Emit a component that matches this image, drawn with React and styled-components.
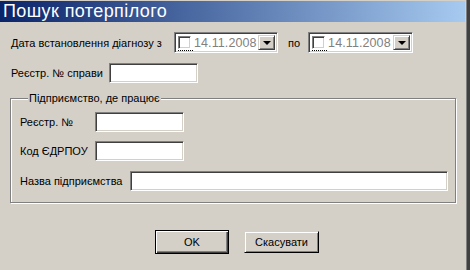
import React from 'react';
import styled, { createGlobalStyle } from 'styled-components';

const Global = createGlobalStyle`
  html, body {
    margin: 0;
    padding: 0;
    background: #d4d0c8;
  }
  body {
    font-family: "Liberation Sans", Arial, sans-serif;
    font-size: 11px;
    color: #000;
  }
`;

const Window = styled.div`
  width: 470px;
  height: 270px;
  box-sizing: border-box;
  background: #d4d0c8;
  border-right: 3px solid #404040;
  box-shadow: inset -1px 0 #808080;
  padding-right: 2px;
  display: flex;
  flex-direction: column;
  overflow: hidden;
`;

const TitleBar = styled.div`
  height: 21px;
  margin-top: 1px;
  background: linear-gradient(to right, #0a246a, #a6caf0);
  color: #fff;
  font-size: 18px;
  letter-spacing: 0.4px;
  line-height: 20px;
  padding-left: 3px;
  white-space: nowrap;
`;

const Body = styled.div`
  display: flex;
  flex-direction: column;
  padding: 10px 0 0 11px;
`;

const Row = styled.div`
  display: flex;
  align-items: center;
  height: ${p => p.$h || 21}px;
  margin-top: ${p => p.$mt || 0}px;
`;

const Label = styled.span`
  width: ${p => (p.$w ? `${p.$w}px` : 'auto')};
  margin-right: ${p => p.$mr || 0}px;
  margin-left: ${p => p.$ml || 0}px;
  white-space: nowrap;
`;

const Sunken = styled.div`
  box-sizing: border-box;
  width: ${p => p.$w}px;
  height: ${p => p.$h || 20}px;
  background: #fff;
  border-top: 1px solid #808080;
  border-left: 1px solid #808080;
  border-bottom: 1px solid #fff;
  border-right: 1px solid #fff;
  box-shadow: inset 1px 1px #404040, inset -1px -1px #d4d0c8;
`;

const Picker = styled(Sunken)`
  display: flex;
  align-items: center;
  padding: 2px 2px 2px 3px;
`;

const Check = styled.span`
  position: relative;
  width: 13px;
  height: 13px;
  box-sizing: border-box;
  background: #fff;
  border-top: 1px solid #808080;
  border-left: 1px solid #808080;
  border-bottom: 1px solid #fff;
  border-right: 1px solid #fff;
  box-shadow: inset 1px 1px #404040, inset -1px -1px #d4d0c8;
  margin-right: 3px;
  &::after {
    content: '';
    position: absolute;
    left: -1px;
    right: -3px;
    bottom: -3px;
    border-bottom: 1px dotted #000;
  }
`;

const DateText = styled.span`
  flex: 1;
  color: #808080;
  font-size: 12.5px;
  letter-spacing: 0.1px;
`;

const DropBtn = styled.span`
  width: 17px;
  height: 15px;
  box-sizing: border-box;
  background: #d4d0c8;
  border-top: 1px solid #d4d0c8;
  border-left: 1px solid #d4d0c8;
  border-bottom: 1px solid #404040;
  border-right: 1px solid #404040;
  box-shadow: inset 1px 1px #fff, inset -1px -1px #808080;
  display: flex;
  align-items: center;
  justify-content: center;
  &::before {
    content: '';
    border-left: 4px solid transparent;
    border-right: 4px solid transparent;
    border-top: 4px solid #000;
  }
`;

const Group = styled.fieldset`
  margin: 10px 0 0 -1px;
  width: 446px;
  height: 111px;
  box-sizing: border-box;
  padding: 3px 0 0 9px;
  border: 1px solid #808080;
  box-shadow: inset 1px 1px #fff, 1px 1px #fff;
  display: flex;
  flex-direction: column;
`;

const Legend = styled.legend`
  padding: 0 1px;
  margin-left: 8px;
  background: #d4d0c8;
`;

const Buttons = styled.div`
  display: flex;
  justify-content: center;
  align-items: center;
  gap: 15px;
  margin-top: 27px;
  padding-right: 2px;
`;

const Button = styled.button`
  font-family: "Liberation Sans", Arial, sans-serif;
  font-size: 11px;
  font-weight: normal;
  color: #000;
  box-sizing: border-box;
  width: ${p => (p.$default ? 74 : 75)}px;
  height: ${p => (p.$default ? 24 : 22)}px;
  background: #d4d0c8;
  padding: 0;
  border: 1px solid ${p => (p.$default ? '#000' : '#d4d0c8')};
  border-right-color: #000;
  border-bottom-color: #000;
  box-shadow: ${p =>
    p.$default
      ? 'inset 1px 1px #fff, inset -1px -1px #404040, inset -2px -2px #808080'
      : 'inset 1px 1px #fff, inset -1px -1px #808080'};
`;

const DatePicker = ({ w }) => (
  <Picker $w={w} $h={21}>
    <Check />
    <DateText>14.11.2008</DateText>
    <DropBtn />
  </Picker>
);

export default function App() {
  return (
    <Window>
      <Global />
      <TitleBar>Пошук потерпілого</TitleBar>
      <Body>
        <Row>
          <Label $w={163}>Дата встановлення діагнозу з</Label>
          <DatePicker w={104} />
          <Label $ml={10} $mr={8}>по</Label>
          <DatePicker w={105} />
        </Row>
        <Row $h={19} $mt={10}>
          <Label $mr={6}>Реєстр. № справи</Label>
          <Sunken $w={89} />
        </Row>
        <Group>
          <Legend>Підприємство, де працює</Legend>
          <Row $h={20} $mt={5}>
            <Label $w={75}>Реєстр. №</Label>
            <Sunken $w={89} />
          </Row>
          <Row $h={20} $mt={9}>
            <Label $w={75}>Код ЄДРПОУ</Label>
            <Sunken $w={89} />
          </Row>
          <Row $h={20} $mt={10}>
            <Label $w={110}>Назва підприємства</Label>
            <Sunken $w={318} />
          </Row>
        </Group>
        <Buttons>
          <Button $default>OK</Button>
          <Button>Скасувати</Button>
        </Buttons>
      </Body>
    </Window>
  );
}
